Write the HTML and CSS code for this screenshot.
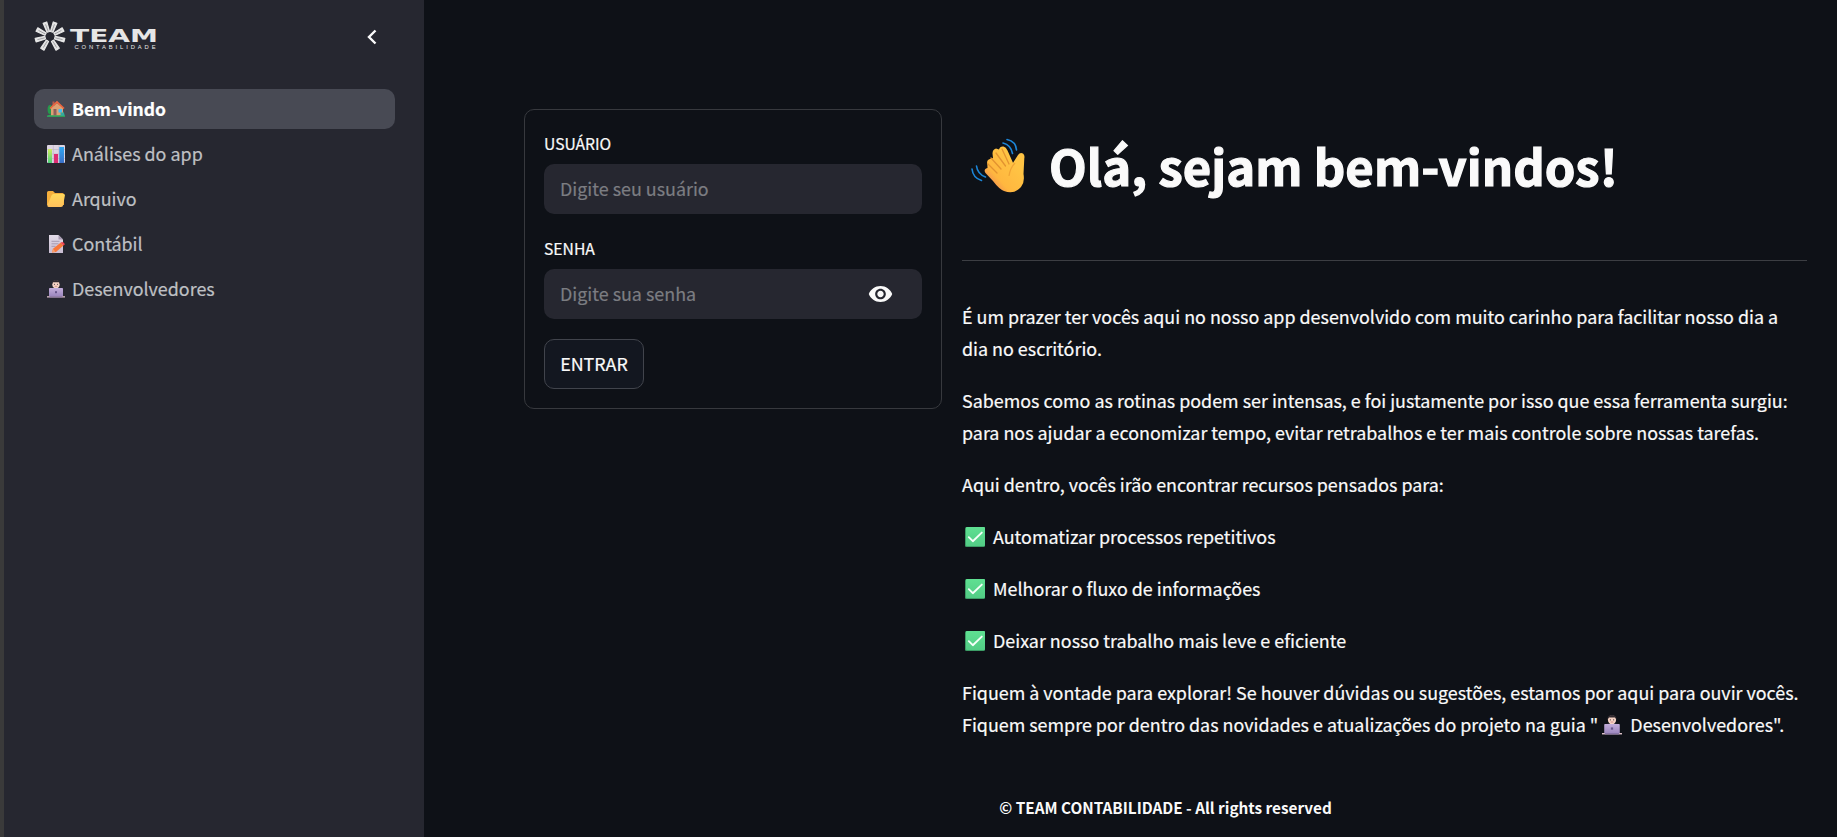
FILE: index.html
```html
<!DOCTYPE html>
<html lang="pt-BR">
<head>
<meta charset="utf-8">
<title>TEAM Contabilidade</title>
<link rel="stylesheet" href="styles.css">
</head>
<body>
<svg class="sprite" aria-hidden="true">
  <defs>
    <linearGradient id="gGreen" x1="0" y1="0" x2="0" y2="1"><stop offset="0" stop-color="#d0ee60"/><stop offset="1" stop-color="#4bd07a"/></linearGradient>
    <linearGradient id="gBlue" x1="0" y1="0" x2="0" y2="1"><stop offset="0" stop-color="#2fa8f2"/><stop offset="1" stop-color="#3b70c8"/></linearGradient>
    <linearGradient id="gFolder" x1="0" y1="0" x2="0" y2="1"><stop offset="0" stop-color="#ffd85a"/><stop offset="1" stop-color="#ffc05c"/></linearGradient>
    <linearGradient id="gPage" x1="0" y1="0" x2="0" y2="1"><stop offset="0" stop-color="#e2dbe8"/><stop offset="1" stop-color="#c9bdd2"/></linearGradient>
    <linearGradient id="gLaptop" x1="0" y1="0" x2="0" y2="1"><stop offset="0" stop-color="#c3aedb"/><stop offset="1" stop-color="#9a85bd"/></linearGradient>
    <linearGradient id="gHand" x1="0.2" y1="0.8" x2="0.7" y2="0.3"><stop offset="0" stop-color="#f59a4c"/><stop offset="0.25" stop-color="#ffb73f"/><stop offset="1" stop-color="#ffc444"/></linearGradient>
    <linearGradient id="gCheck" x1="0" y1="0" x2="0" y2="1"><stop offset="0" stop-color="#5fe092"/><stop offset="1" stop-color="#52cc85"/></linearGradient>
  </defs>
  <symbol id="house" viewBox="0 0 18 18">
    <ellipse cx="3" cy="9.5" rx="2.4" ry="4.5" fill="#259a4d"/>
    <path d="M0 16.5q2-2.5 5-2l8-.5 3-3 1 3 1 2.5z" fill="#2fa556"/>
    <path d="M4 8 10 3l6 5v7.5H4z" fill="#dca174"/>
    <path d="M6.500 9h3v6.500h-3z" fill="#8d5f5c"/>
    <path d="M11.500 9h3.500v3.500h-3.500z" fill="#43bff5"/>
    <path d="M5.500 1.500h2v4h-2z" fill="#b65a4c"/>
    <path d="M3 8.500 10 2l7 6.500" fill="none" stroke="#ee6640" stroke-width="1.700"/>
    <path d="M0 15.500h18v1.300H0z" fill="#2fa75b"/>
    <path d="M13.500 12.500H17l.6 3.200h-4z" fill="#31a9a0"/>
  </symbol>
  <symbol id="chart" viewBox="0 0 18 18">
    <rect width="18" height="18" rx="1" fill="#ddd5e2"/>
    <path d="M0 4.500h18M0 9h18M0 13.500h18M6.300 0v18M12 0v18" stroke="#bdb2c5" stroke-width=".6"/>
    <rect x="1" y="4" width="4" height="14" fill="url(#gGreen)"/>
    <rect x="7" y="9" width="4" height="9" fill="#dd2d72"/>
    <rect x="12.300" y="2" width="4.700" height="16" fill="url(#gBlue)"/>
  </symbol>
  <symbol id="folder" viewBox="0 0 18 18">
    <path d="M0 2.500Q0 1 1.500 1H6l2 2h7.500Q17 3 17 4.500V15H0z" fill="#f5af3c"/>
    <path d="M4.500 5.500Q5 4 6.500 4h10q1.700 0 1.400 1.600l-1.700 9.200Q16 17 14 17H2Q0 17 .4 15.300z" fill="url(#gFolder)"/>
  </symbol>
  <symbol id="memo" viewBox="0 0 18 18">
    <path d="M2 0h9.500L16 4.500V18H2z" fill="url(#gPage)"/>
    <path d="M11.500 0 16 4.500h-4.500z" fill="#a79ab2"/>
    <path d="M4.500 6.300h8M4.500 8.800h7M4.500 11.300h4" stroke="#a094ab" stroke-width=".9"/>
    <path d="M5 17.500 6 13.800 13.500 7.800 16.500 10.500 9 17z" fill="#f9783a"/>
    <path d="m13.500 7.800 1.500-.9Q17.600 7 17.800 9.500L16.500 10.500z" fill="#f0414f"/>
    <path d="M5 17.500 6 13.800 8.300 16.800z" fill="#f3a170"/>
  </symbol>
  <symbol id="dev" viewBox="0 0 18 18">
    <path d="M3 9.500Q4 7.500 9 7.500t6 2v5H3z" fill="#453e50"/>
    <path d="M7.300 6h3.400v2.500h-3.400z" fill="#e5b8a8"/>
    <ellipse cx="9" cy="4.300" rx="3.700" ry="4" fill="#f6d3c4"/>
    <path d="M5 4.200Q4.500.2 9 0q4.500.2 4 4.200L11.900 2.300H6.100z" fill="#2f292f"/>
    <circle cx="7.500" cy="4.300" r=".55" fill="#493942"/><circle cx="10.500" cy="4.300" r=".55" fill="#493942"/>
    <path d="M7.800 6.300h2.400" stroke="#bd6c6c" stroke-width=".6"/>
    <rect x="2" y="8" width="14" height="8.800" rx=".8" fill="url(#gLaptop)"/>
    <rect x="8" y="11.200" width="2" height="2" fill="#66558a"/>
    <path d="M0 16.200h18v1.300H0z" fill="#dbbfc7"/>
    <path d="M2.500 16.200h13v1.300h-13z" fill="#8673a5"/>
  </symbol>
  <symbol id="check" viewBox="0 0 20 20">
    <rect width="20" height="20" rx="1.500" fill="#3c9d66"/>
    <rect x="1" width="19" height="19" rx="1" fill="url(#gCheck)"/>
    <path d="m3.800 10.200 4 4L16.800 5.600" fill="none" stroke="#f5fff9" stroke-width="1.900" stroke-linecap="round" stroke-linejoin="round"/>
  </symbol>
</svg>

<div class="app">
  <aside class="sidebar">
    <header class="sidebar-head">
      <svg class="logo" viewBox="0 0 124 32" width="124" height="32">
        <defs>
          <g id="ray"><path d="M-1.300-5-1.900-14.800H1.900L1.300-5z" fill="#e6e6e6" stroke="#e6e6e6" stroke-width="1.200" stroke-linejoin="round"/><path d="M0-5.500V-13" stroke="#96969b" stroke-width=".8"/></g>
        </defs>
        <g transform="translate(16 16.500)">
          <use href="#ray" transform="rotate(20)"/><use href="#ray" transform="rotate(-20)"/>
          <use href="#ray" transform="rotate(62)"/><use href="#ray" transform="rotate(-62)"/>
          <use href="#ray" transform="rotate(104)"/><use href="#ray" transform="rotate(-104)"/>
          <use href="#ray" transform="rotate(149)"/><use href="#ray" transform="rotate(-149)"/>
        </g>
        <text class="logo-name" x="36" y="21.500" textLength="88" lengthAdjust="spacingAndGlyphs">TEAM</text>
        <text class="logo-sub" x="40.500" y="29.300" textLength="81">CONTABILIDADE</text>
      </svg>
      <svg class="collapse" viewBox="0 0 10 16" width="10" height="16"><path d="M8.500 1.500 2 8l6.500 6.500" fill="none" stroke="#fafafa" stroke-width="2.400"/></svg>
    </header>
    <nav class="nav">
      <a class="nav-item active"><svg class="nav-icon"><use href="#house"/></svg><span class="nav-text">Bem-vindo</span></a>
      <a class="nav-item"><svg class="nav-icon"><use href="#chart"/></svg><span class="nav-text">Análises do app</span></a>
      <a class="nav-item"><svg class="nav-icon"><use href="#folder"/></svg><span class="nav-text">Arquivo</span></a>
      <a class="nav-item"><svg class="nav-icon"><use href="#memo"/></svg><span class="nav-text">Contábil</span></a>
      <a class="nav-item"><svg class="nav-icon"><use href="#dev"/></svg><span class="nav-text">Desenvolvedores</span></a>
    </nav>
  </aside>

  <main class="main">
    <form class="login">
      <label class="label" for="user">USUÁRIO</label>
      <div class="field"><input class="input" id="user" type="text" placeholder="Digite seu usuário"></div>
      <label class="label" for="pass">SENHA</label>
      <div class="field"><input class="input" id="pass" type="password" placeholder="Digite sua senha">
        <svg class="eye" viewBox="1 4.500 22 15" width="25" height="16"><path fill="#fafafa" d="M12 4.500C7 4.500 2.730 7.610 1 12c1.730 4.390 6 7.500 11 7.500s9.270-3.110 11-7.500c-1.730-4.390-6-7.500-11-7.500zM12 17c-2.760 0-5-2.240-5-5s2.240-5 5-5 5 2.240 5 5-2.240 5-5 5zm0-8c-1.660 0-3 1.340-3 3s1.340 3 3 3 3-1.340 3-3-1.340-3-3-3z"/></svg>
      </div>
      <button class="submit" type="button">ENTRAR</button>
    </form>

    <section class="content">
      <h1 class="title">
        <svg class="wave" viewBox="0 0 55 56" width="55" height="56">
          <g fill="none" stroke="#1c86d8" stroke-width="1.600" stroke-linecap="round">
            <path d="M36 1.500q9 2 9.500 10.500M32 5q8 2 9.500 10.500"/>
            <path d="M1 31q1 9 9.500 11.500M5.500 28q1 8 9 11"/>
          </g>
          <path d="M40 28 47 17q2-3 5-1.500 2 1.500 1.300 5L52.500 36q1.500 8-2.500 13-7 8-17 4Q28 51 22 43L14.500 35q-2-3 .5-4.500l1.500-.5-.2-4q-1-4 2.700-5l3-1-.5-4.500q0-4 3.500-5l3 1q1-3.500 4.500-3 2.500.5 4 4L43 27z" fill="url(#gHand)"/>
          <path d="m17 26 9 9M20 20l10 11M25 15l9.500 13M31 11l7 15" fill="none" stroke="#e39330" stroke-width="1.300" stroke-linecap="round"/>
          <path d="M38 38q1-8 6-13" fill="none" stroke="#f0a435" stroke-width="1.200"/>
        </svg>
        <span>Olá, sejam bem-vindos!</span>
      </h1>
      <hr class="rule">
      <p class="text">É um prazer ter vocês aqui no nosso app desenvolvido com muito carinho para facilitar nosso dia a<br>dia no escritório.</p>
      <p class="text">Sabemos como as rotinas podem ser intensas, e foi justamente por isso que essa ferramenta surgiu:<br>para nos ajudar a economizar tempo, evitar retrabalhos e ter mais controle sobre nossas tarefas.</p>
      <p class="text">Aqui dentro, vocês irão encontrar recursos pensados para:</p>
      <p class="text item"><svg class="check"><use href="#check"/></svg>Automatizar processos repetitivos</p>
      <p class="text item"><svg class="check"><use href="#check"/></svg>Melhorar o fluxo de informações</p>
      <p class="text item"><svg class="check"><use href="#check"/></svg>Deixar nosso trabalho mais leve e eficiente</p>
      <p class="text">Fiquem à vontade para explorar! Se houver dúvidas ou sugestões, estamos por aqui para ouvir vocês.<br>Fiquem sempre por dentro das novidades e atualizações do projeto na guia "<svg class="dev-inline"><use href="#dev"/></svg>Desenvolvedores".</p>
      <footer class="footer">© TEAM CONTABILIDADE - All rights reserved</footer>
    </section>
  </main>
</div>
</body>
</html>
```
FILE: styles.css
```css
* { box-sizing: border-box; }

body {
  margin: 0;
  background: #0e1117;
  color: #fafafa;
  font-family: "Noto Sans CJK JP", "Noto Sans", sans-serif;
  font-size: 17.9px;
  line-height: 32px;
  -webkit-text-stroke: .2px currentColor;
  overflow: hidden;
}

.sprite { position: absolute; width: 0; height: 0; }

.app { display: flex; width: 1837px; height: 837px; }

.sidebar {
  flex: none;
  width: 424px;
  padding: 20px 29px 0 30px;
  border-left: 4px solid #3a3a3a;
  background: #262730;
}

.sidebar-head {
  display: flex;
  align-items: flex-start;
  justify-content: space-between;
  height: 69px;
  padding-right: 18px;
}

.logo { display: block; -webkit-text-stroke: 0; }
.logo-name { font: bold 18.5px "DejaVu Sans", sans-serif; fill: #e6e6e6; }
.logo-sub { font: 5.8px "Liberation Sans", sans-serif; fill: #e6e6e6; }
.collapse { margin-top: 9px; }

.nav { display: flex; flex-direction: column; gap: 5px; }

.nav-item {
  display: flex;
  align-items: center;
  gap: 7px;
  height: 40px;
  padding: 0 13px;
  border-radius: 10px;
  color: #bfc0c4;
}

.nav-item.active {
  background: #484a54;
  color: #fff;
  font-weight: 700;
  font-size: 17.5px;
}

.nav-icon { flex: none; width: 18px; height: 18px; }
.nav-text { padding-bottom: 2px; }
.nav-item.active .nav-text { padding-bottom: 0; }

.main {
  display: grid;
  grid-template-columns: 418px 845px;
  column-gap: 20px;
  align-items: start;
  padding: 109px 30px 0 100px;
}

.login {
  display: flex;
  flex-direction: column;
  height: 300px;
  padding: 19px;
  border: 1px solid #37393e;
  border-radius: 10px;
}

.label {
  height: 30px;
  margin-bottom: 5px;
  font-size: 15.7px;
  line-height: 30px;
}

.field {
  display: flex;
  align-items: center;
  height: 50px;
  margin-bottom: 20px;
  padding: 0 29px 2px 16px;
  border-radius: 10px;
  background: #262730;
}

.input {
  flex: 1;
  min-width: 0;
  padding: 0;
  border: 0;
  outline: 0;
  background: none;
  color: #fafafa;
  font: inherit;
}

.input::placeholder { color: #7c7d82; opacity: 1; }
.eye { margin-top: 1px; }

.submit {
  width: 100px;
  height: 50px;
  padding: 0 0 2px;
  border: 1px solid #41444c;
  border-radius: 10px;
  background: #131720;
  color: #fafafa;
  font: inherit;
}

.title {
  display: flex;
  align-items: flex-start;
  gap: 23px;
  height: 151px;
  margin: 0;
  padding: 29px 0 0 9px;
  font-size: 49px;
  font-weight: 700;
  line-height: 54px;
  white-space: nowrap;
  letter-spacing: .05px;
  -webkit-text-stroke: 1.2px currentColor;
}

.wave { flex: none; }

.rule { height: 1px; margin: 0 0 39px; border: 0; background: #3c3e43; }

.text { margin: 0 0 20px; white-space: nowrap; }
.item { display: flex; align-items: center; gap: 8px; padding-left: 3px; }
.check { flex: none; width: 20px; height: 20px; margin-top: 2px; }
.dev-inline { width: 20px; height: 20px; margin: 0 8px 0 4px; vertical-align: -3px; }

.footer {
  width: 407px;
  margin-top: 51px;
  font-size: 15.3px;
  font-weight: 700;
  text-align: center;
  -webkit-text-stroke: 0;
}
```
